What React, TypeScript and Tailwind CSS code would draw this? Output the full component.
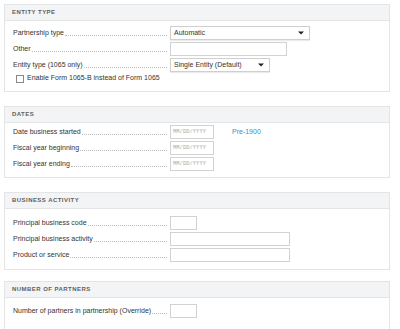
import React from 'react'

function Panel({ title, className, bodyClass, children }: { title: string; className?: string; bodyClass?: string; children: React.ReactNode }) {
  return (
    <div className={`border border-[#e4e4e4] bg-white ${className ?? ''}`}>
      <div className="h-[16px] bg-[#f3f4f6] border-b border-[#e4e4e4] px-[7px] flex items-center">
        <span className="text-[6px] font-bold tracking-[0.45px] text-[#5f5f5f]">{title}</span>
      </div>
      <div className={`pl-[8px] ${bodyClass ?? ''}`}>{children}</div>
    </div>
  )
}

function Row({ label, children }: { label: string; children: React.ReactNode }) {
  return (
    <div className="flex items-center h-[16px]">
      <div className="w-[154px] flex items-end h-[10px]">
        <span className="text-[7px] leading-[10px] text-[#333] whitespace-nowrap">{label}</span>
        <span className="flex-1 border-b border-dotted border-[#bbb] mb-[2px] ml-[1px]" />
      </div>
      <div className="ml-[3px] flex items-center">{children}</div>
    </div>
  )
}

function TextBox({ w }: { w: string }) {
  return <div className={`${w} h-[14px] border border-[#d2d2d2] bg-white`} />
}

function Select({ w, value }: { w: string; value: string }) {
  return (
    <div className={`${w} h-[14px] border border-[#cfcfcf] bg-white flex items-center justify-between pl-[3px] pr-[5px] shadow-[0_1px_1px_rgba(0,0,0,0.08)]`}>
      <span className="text-[7px] text-[#333]">{value}</span>
      <svg width="6" height="4" viewBox="0 0 6 4"><path d="M0 0.5h6L3 3.5z" fill="#222" /></svg>
    </div>
  )
}

function DateBox() {
  return (
    <div className="w-[44px] h-[14px] border border-[#d2d2d2] bg-white flex items-center pl-[2px]">
      <span className="text-[5.5px] text-[#aaa]" style={{ fontFamily: '"Liberation Mono", monospace' }}>MM/DD/YYYY</span>
    </div>
  )
}

export default function App() {
  return (
    <div className="w-[400px] h-[329px] overflow-hidden bg-white pt-[4px] pl-[4px] pr-[10px]" style={{ fontFamily: '"Liberation Sans", Arial, sans-serif' }}>
      <Panel title="ENTITY TYPE" className="mb-[14px]" bodyClass="pt-[4px] pb-[8px]">
        <Row label="Partnership type">
          <Select w="w-[140px]" value="Automatic" />
        </Row>
        <Row label="Other">
          <TextBox w="w-[117px]" />
        </Row>
        <Row label="Entity type (1065 only)">
          <Select w="w-[100px]" value="Single Entity (Default)" />
        </Row>
        <div className="flex items-center h-[9px] mt-[1px] pl-[3px]">
          <div className="w-[8px] h-[8px] border border-[#888] bg-white" />
          <span className="ml-[3px] text-[7px] text-[#333]">Enable Form 1065-B instead of Form 1065</span>
        </div>
      </Panel>

      <Panel title="DATES" className="mb-[14px]" bodyClass="pt-[1px] pb-[5px]">
        <Row label="Date business started">
          <DateBox />
          <span className="ml-[18px] text-[7px] text-[#3c8ccb]">Pre-1900</span>
        </Row>
        <Row label="Fiscal year beginning">
          <DateBox />
        </Row>
        <Row label="Fiscal year ending">
          <DateBox />
        </Row>
      </Panel>

      <Panel title="BUSINESS ACTIVITY" className="mb-[11px]" bodyClass="pt-[6px] pb-[6px]">
        <Row label="Principal business code">
          <TextBox w="w-[27px]" />
        </Row>
        <Row label="Principal business activity">
          <TextBox w="w-[120px]" />
        </Row>
        <Row label="Product or service">
          <TextBox w="w-[120px]" />
        </Row>
      </Panel>

      <Panel title="NUMBER OF PARTNERS" bodyClass="pt-[5px] pb-[10px]">
        <Row label="Number of partners in partnership (Override)">
          <TextBox w="w-[27px]" />
        </Row>
      </Panel>
    </div>
  )
}
